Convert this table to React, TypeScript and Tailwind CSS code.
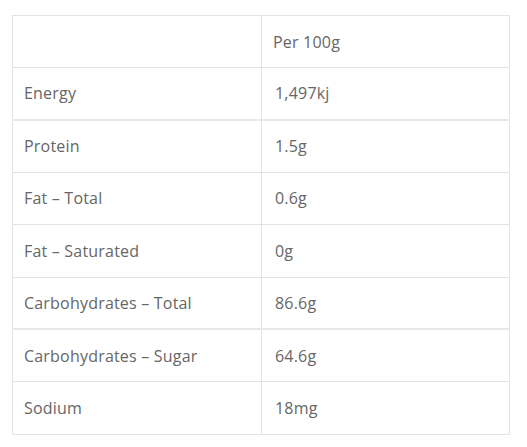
const rows = [
  { label: "Energy", value: "1,497kj", thick: true },
  { label: "Protein", value: "1.5g" },
  { label: "Fat – Total", value: "0.6g" },
  { label: "Fat – Saturated", value: "0g" },
  { label: "Carbohydrates – Total", value: "86.6g", thick: true },
  { label: "Carbohydrates – Sugar", value: "64.6g" },
  { label: "Sodium", value: "18mg" },
];

export default function App() {
  return (
    <div className="bg-white w-[527px] h-[447px] pt-[15px] pl-[12px] font-['Open_Sans',sans-serif] text-[16px] tracking-[0.2px] text-[#666]">
      <table className="w-[498px] border-collapse border border-[#e3e3e3]">
        <thead>
          <tr className="h-[52px] border-b border-[#e3e3e3]">
            <th className="w-[249px] border-r border-[#e3e3e3]"></th>
            <th className="pl-[11px] text-left font-normal">Per 100g</th>
          </tr>
        </thead>
        <tbody>
          {rows.map((r) => (
            <tr
              key={r.label}
              className={
                r.thick
                  ? "h-[52.4px] border-b-2 border-[#e8e8e8]"
                  : "h-[52.4px] border-b border-[#e3e3e3]"
              }
            >
              <td className="pl-[11px] border-r border-[#e3e3e3]">{r.label}</td>
              <td className="pl-[13px]">{r.value}</td>
            </tr>
          ))}
        </tbody>
      </table>
    </div>
  );
}
